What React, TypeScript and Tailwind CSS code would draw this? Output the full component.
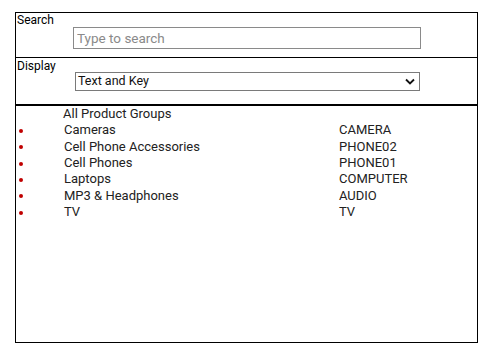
import { useState } from 'react';

type Group = { name: string; key: string };

const groups: Group[] = [
  { name: 'Cameras', key: 'CAMERA' },
  { name: 'Cell Phone Accessories', key: 'PHONE02' },
  { name: 'Cell Phones', key: 'PHONE01' },
  { name: 'Laptops', key: 'COMPUTER' },
  { name: 'MP3 & Headphones', key: 'AUDIO' },
  { name: 'TV', key: 'TV' },
];

export default function App() {
  const [query, setQuery] = useState('');

  return (
    <div className="w-[490px] h-[352px] bg-white pt-[12px] pl-[15px] font-['Roboto',sans-serif] text-black">
      <div className="w-[463px] h-[331px] border border-black flex flex-col">
        {/* search */}
        <div className="h-[45px] border-b border-black flex flex-col pl-[1px]">
          <div className="text-[12px] leading-[14px]">Search</div>
          <input
            value={query}
            onChange={(e) => setQuery(e.target.value)}
            placeholder="Type to search"
            className="ml-[56px] w-[348px] h-[22px] border border-[#8a8a8a] px-[3px] text-[13.5px] text-[#444] placeholder:text-[#8a8a8a] outline-none"
          />
        </div>

        {/* display */}
        <div className="h-[48px] border-b-2 border-black flex flex-col pl-[1px]">
          <div className="text-[12px] leading-[12px] pt-[2px]">Display</div>
          <div className="ml-[58px] w-[345px] h-[19px] border border-[#7a7a7a] flex items-center justify-between pl-[2px] pr-[4px]">
            <span className="text-[12.5px] leading-none text-[#111]">Text and Key</span>
            <svg width="10" height="7" viewBox="0 0 10 7" fill="none">
              <polyline points="1,1.5 5,5.5 9,1.5" stroke="#111" strokeWidth="1.8" />
            </svg>
          </div>
        </div>

        {/* list */}
        <div className="text-[13px] leading-[16.33px] text-[#222]">
          <div className="pl-[47px]">All Product Groups</div>
          {groups.map((g) => (
            <div key={g.key} className="grid grid-cols-[48px_275px_1fr] items-center">
              <span className="ml-[3px] w-[4px] h-[4px] rounded-full bg-[#c00000] mt-[1px]" />
              <span>{g.name}</span>
              <span>{g.key}</span>
            </div>
          ))}
        </div>
      </div>
    </div>
  );
}
